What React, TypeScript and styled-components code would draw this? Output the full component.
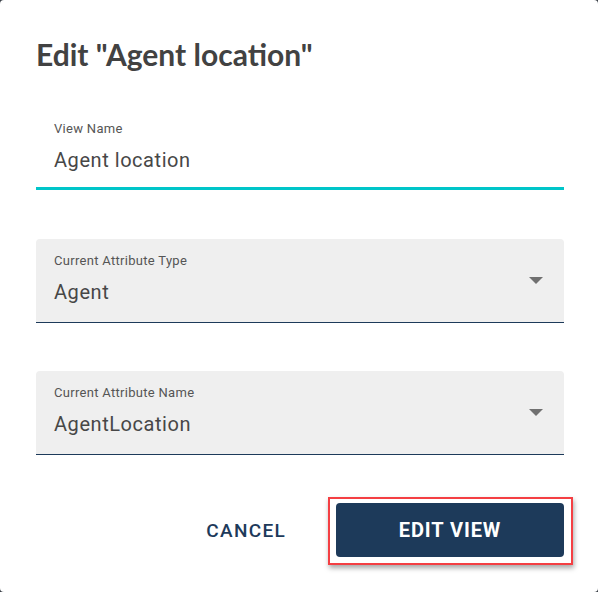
import React from 'react'
import styled, { createGlobalStyle } from 'styled-components'

const GlobalStyle = createGlobalStyle`
  html, body {
    margin: 0;
    padding: 0;
    background: #3a3f47;
  }
  * { box-sizing: border-box; }
`

const Dialog = styled.div`
  width: 598px;
  height: 592px;
  background: #ffffff;
  border-radius: 4px;
  padding: 36px 34px 0 36px;
  display: flex;
  flex-direction: column;
  font-family: Roboto, 'Liberation Sans', sans-serif;
`

const Title = styled.h2`
  margin: 0 0 33px 0;
  font-family: Lato, 'Liberation Sans', sans-serif;
  font-weight: 700;
  font-size: 30px;
  line-height: 36px;
  color: #424242;
`

const TextField = styled.div`
  display: flex;
  flex-direction: column;
  padding: 16px 18px 15px 18px;
  border-bottom: 3px solid #00c5c9;
  margin-bottom: 49px;
`

const Label = styled.span`
  font-size: 13px;
  line-height: 16px;
  letter-spacing: 0.3px;
  color: #555555;
`

const Value = styled.span<{ $gap: number }>`
  margin-top: ${(p) => p.$gap}px;
  font-size: 20px;
  line-height: 24px;
  letter-spacing: 0.55px;
  color: #474747;
`

const Select = styled.div`
  position: relative;
  display: flex;
  flex-direction: column;
  background: #efefef;
  border-radius: 4px 4px 0 0;
  border-bottom: 1px solid #1d3a5a;
  padding: 14px 18px 18px 18px;
  margin-bottom: 48px;
`

const Arrow = styled.span`
  position: absolute;
  right: 21px;
  top: 50%;
  margin-top: -4px;
  width: 0;
  height: 0;
  border-left: 7px solid transparent;
  border-right: 7px solid transparent;
  border-top: 7px solid #707070;
`

const Actions = styled.div`
  display: flex;
  justify-content: flex-end;
  align-items: center;
  gap: 50px;
`

const TextButton = styled.button`
  border: none;
  background: none;
  padding: 0;
  font-family: Roboto, 'Liberation Sans', sans-serif;
  font-weight: 500;
  font-size: 19px;
  letter-spacing: 1.3px;
  color: #1d3a5a;
  cursor: pointer;
`

const Highlighted = styled.div`
  position: relative;
  &::before {
    content: '';
    position: absolute;
    left: -8px;
    right: -9px;
    top: -6px;
    bottom: -8px;
    border: 2px solid #f43f43;
    box-shadow: 1px 3px 5px rgba(0, 0, 0, 0.35);
    pointer-events: none;
  }
`

const PrimaryButton = styled.button`
  width: 228px;
  height: 54px;
  border: none;
  border-radius: 4px;
  background: #1d3a5a;
  color: #ffffff;
  font-family: Roboto, 'Liberation Sans', sans-serif;
  font-weight: 700;
  font-size: 20px;
  letter-spacing: 0.9px;
  cursor: pointer;
`

export default function App() {
  return (
    <>
      <GlobalStyle />
      <Dialog>
        <Title>Edit "Agent location"</Title>

        <TextField>
          <Label>View Name</Label>
          <Value $gap={11}>Agent location</Value>
        </TextField>

        <Select>
          <Label>Current Attribute Type</Label>
          <Value $gap={11}>Agent</Value>
          <Arrow />
        </Select>

        <Select>
          <Label>Current Attribute Name</Label>
          <Value $gap={11}>AgentLocation</Value>
          <Arrow />
        </Select>

        <Actions>
          <TextButton>CANCEL</TextButton>
          <Highlighted>
            <PrimaryButton>EDIT VIEW</PrimaryButton>
          </Highlighted>
        </Actions>
      </Dialog>
    </>
  )
}
